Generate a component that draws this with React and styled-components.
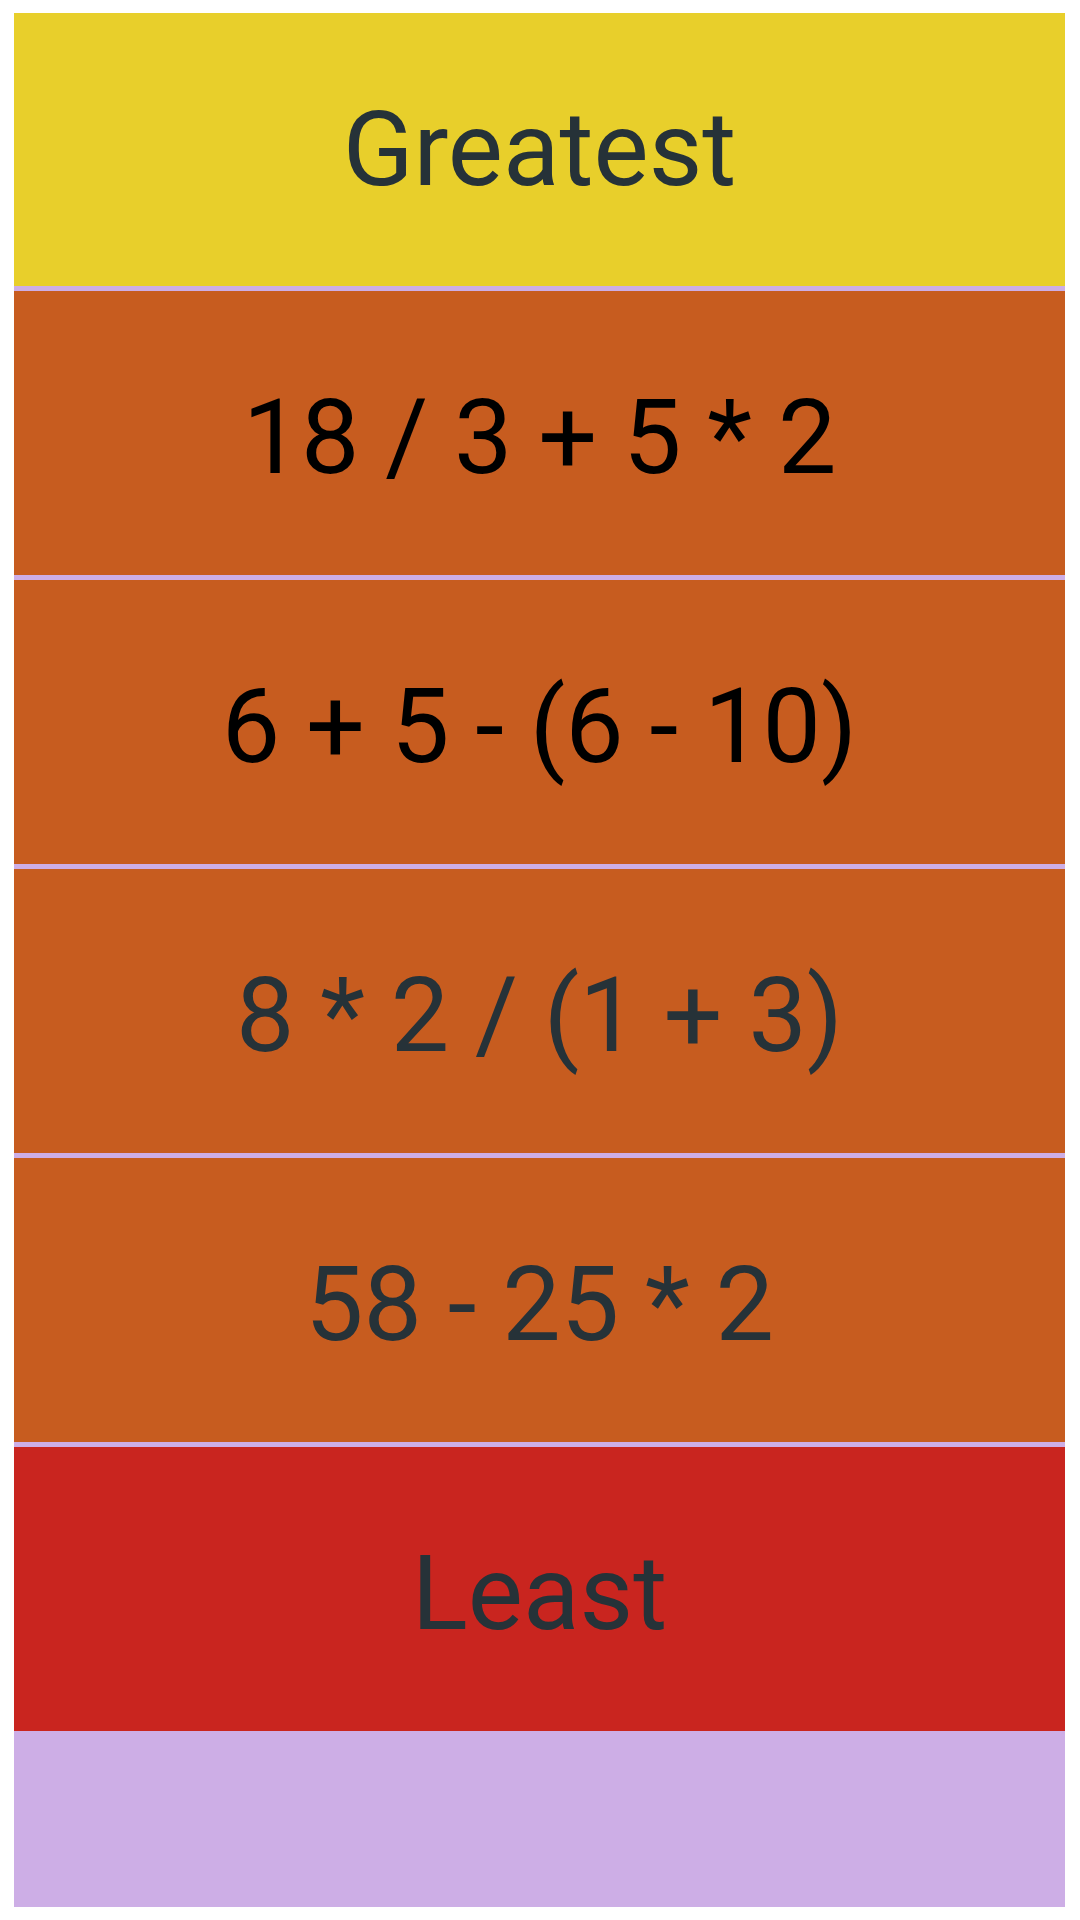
import { createGlobalStyle, styled } from "styled-components";

const GlobalStyle = createGlobalStyle`
  html, body {
    margin: 0;
    padding: 0;
    background: #ffffff;
    font-family: Roboto, "Noto Sans", sans-serif;
  }
`;

const Board = styled.div`
  margin: 13px 15px 0 14px;
  height: 1894px;
  background: #cdaee6;
  display: flex;
  flex-direction: column;
  gap: 5px;
`;

const Row = styled.div`
  box-sizing: border-box;
  height: ${(p) => p.$h || 284}px;
  padding-top: ${(p) => p.$offset ?? 9}px;
  flex-shrink: 0;
  background: ${(p) => p.$bg};
  color: ${(p) => p.$fg};
  display: flex;
  align-items: center;
  justify-content: center;
  font-size: 104px;
  font-weight: 400;
  white-space: pre;
`;

const rows = [
  { text: "Greatest", bg: "#e8cf2b", fg: "#263238", h: 273, offset: 0 },
  { text: "18 / 3 + 5 * 2", bg: "#c75c1f", fg: "#000000" },
  { text: "6 + 5 - (6 - 10)", bg: "#c75c1f", fg: "#000000" },
  { text: "8 * 2 / (1 + 3)", bg: "#c75c1f", fg: "#263238" },
  { text: "58 - 25 * 2", bg: "#c75c1f", fg: "#263238" },
  { text: "Least", bg: "#c9251f", fg: "#263238" },
];

const App = () => {
  return (
    <>
      <GlobalStyle />
      <Board>
        {rows.map((r) => (
          <Row key={r.text} $bg={r.bg} $fg={r.fg} $h={r.h} $offset={r.offset}>
            {r.text}
          </Row>
        ))}
      </Board>
    </>
  );
};

export default App;
